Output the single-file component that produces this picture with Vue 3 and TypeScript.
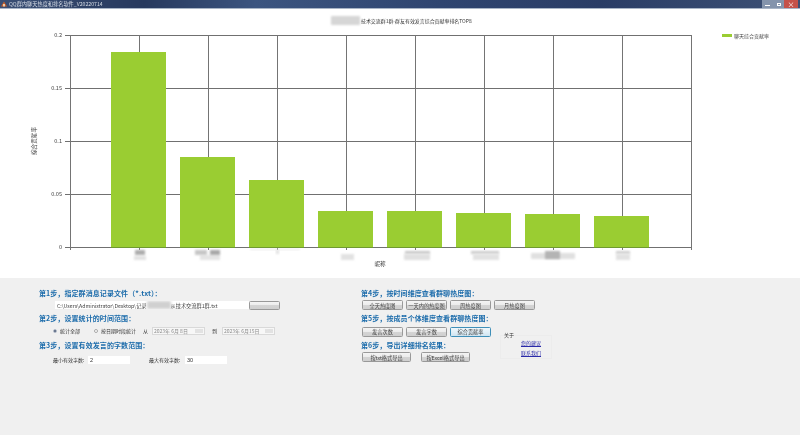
<script setup lang="ts">
const plotLeft = 70
const plotTop = 35
const plotBottom = 247
const plotRight = 691
const verticals = Array.from({ length: 10 }, (_, i) => plotLeft + i * 69)
const yTicks = [
  { label: '0.2', y: 35 },
  { label: '0.15', y: 88 },
  { label: '0.1', y: 141 },
  { label: '0.05', y: 194 },
  { label: '0', y: 247 },
]
const barTops = [52, 157, 180, 211, 211, 213, 214, 216]
const bars = barTops.map((top, i) => ({ x: 111 + i * 69, y: top, h: plotBottom - top }))
const smudges = [
  { x: 134, y: 256, w: 12, h: 4, c: '#e2e2e2' },
  { x: 135, y: 250, w: 10, h: 5, c: '#adadad' },
  { x: 200, y: 255, w: 20, h: 5, c: '#e4e4e4' },
  { x: 195, y: 250, w: 12, h: 5, c: '#c6c6c6' },
  { x: 210, y: 250, w: 10, h: 5, c: '#a8a8a8' },
  { x: 250, y: 249, w: 50, h: 1, c: '#e6e6e6' },
  { x: 276, y: 250, w: 3, h: 4, c: '#e2e2e2' },
  { x: 341, y: 254, w: 13, h: 6, c: '#e2e2e2' },
  { x: 405, y: 251, w: 25, h: 3, c: '#c8c8c8' },
  { x: 404, y: 254, w: 26, h: 6, c: '#e0e0e0' },
  { x: 471, y: 251, w: 28, h: 3, c: '#cccccc' },
  { x: 473, y: 254, w: 26, h: 6, c: '#e2e2e2' },
  { x: 531, y: 253, w: 44, h: 6, c: '#e0e0e0' },
  { x: 545, y: 251, w: 15, h: 8, c: '#b4b4b4' },
  { x: 616, y: 251, w: 14, h: 3, c: '#cfcfcf' },
  { x: 616, y: 254, w: 14, h: 6, c: '#e2e2e2' },
]
const timeButtons = ['全天热度图', '一天内的热度图', '周热度图', '月热度图']
const memberButtons = ['发言次数', '发言字数', '综合贡献率']
const exportButtons = ['按txt格式导出', '按Excel格式导出']
</script>

<template>
  <div class="window">
    <header class="titlebar">
      <svg class="app-icon" viewBox="0 0 6 6" width="6" height="6">
        <path d="M3 0.5 L6 5.5 L0 5.5 Z" fill="#c8602c" />
        <rect x="2.2" y="3" width="1.6" height="2.5" fill="#f4e4c8" />
      </svg>
      <span class="title-text">QQ群内聊天热度和排名软件_V20220714</span>
      <div class="window-controls">
        <span class="ctl"><i class="min"></i></span>
        <span class="ctl"><i class="max"></i></span>
        <span class="ctl close"><i class="x">×</i></span>
      </div>
    </header>

    <svg class="chart" viewBox="0 0 800 269" width="800" height="269">
      <defs>
        <filter id="smudge" x="-30%" y="-80%" width="160%" height="260%">
          <feGaussianBlur stdDeviation="1" />
        </filter>
      </defs>
      <g transform="translate(0,-9)">
        <rect x="331" y="16" width="29" height="9" fill="#d6d6d6" filter="url(#smudge)" />
        <text x="361" y="23" class="chart-title">技术交流群1群-群友有效发言综合贡献率排名TOP8</text>

        <g v-for="t in yTicks" :key="t.label">
          <line :x1="plotLeft - 5" :x2="plotRight" :y1="t.y + 0.5" :y2="t.y + 0.5" class="grid" />
          <text :x="plotLeft - 8" :y="t.y + 2.3" text-anchor="end" class="tick">{{ t.label }}</text>
        </g>
        <line v-for="x in verticals" :key="x" :x1="x + 0.5" :x2="x + 0.5" :y1="plotTop" :y2="plotBottom + 3" class="vgrid" />

        <rect v-for="b in bars" :key="b.x" :x="b.x" :y="b.y" width="55" :height="b.h" fill="#9acd32" />
        <line v-for="b in bars" :key="'base' + b.x" :x1="b.x" :x2="b.x + 55" :y1="plotBottom + 0.5" :y2="plotBottom + 0.5" stroke="#6f9a30" />

        <rect v-for="s in smudges" :key="s.x + '-' + s.y" :x="s.x" :y="s.y" :width="s.w" :height="s.h" :fill="s.c" filter="url(#smudge)" />

        <text transform="translate(36,141) rotate(-90)" text-anchor="middle" class="tick">综合贡献率</text>
        <text x="380" y="266" text-anchor="middle" class="tick">昵称</text>

        <rect x="722" y="34" width="10" height="3" fill="#9acd32" />
        <text x="734" y="38" class="legend">聊天综合贡献率</text>
      </g>
    </svg>

    <section class="panel">
      <div class="col-left">
        <h3>第1步，指定群消息记录文件（*.txt）：</h3>
        <div class="row file-row">
          <div class="file-input">
            <span>C:\Users\Administrator\Desktop\记录</span><i class="blur-mask"></i><span>从技术交流群1群.txt</span>
          </div>
          <button class="btn browse"></button>
        </div>
        <h3>第2步，设置统计的时间范围：</h3>
        <div class="row range-row">
          <span class="radio on"></span><span class="label w-all">统计全部</span>
          <span class="radio"></span><span class="label w-date">按日期时段统计</span>
          <span class="label from">从</span>
          <span class="date">2023年 6月 8日<i class="drop"></i></span>
          <span class="label to">到</span>
          <span class="date">2023年 6月15日<i class="drop"></i></span>
        </div>
        <h3>第3步，设置有效发言的字数范围：</h3>
        <div class="row limit-row">
          <span class="label limit-label">最小有效字数:</span>
          <input class="num" value="2" />
          <span class="label limit-label second">最大有效字数:</span>
          <input class="num" value="30" />
        </div>
      </div>

      <div class="col-right">
        <h3 class="full">第4步，按时间维度查看群聊热度图：</h3>
        <div class="btn-row full">
          <button v-for="b in timeButtons" :key="b" class="btn action">{{ b }}</button>
        </div>
        <h3 class="full">第5步，按成员个体维度查看群聊热度图：</h3>
        <div class="btn-row">
          <button v-for="(b, i) in memberButtons" :key="b" class="btn action" :class="{ active: i === 2 }">{{ b }}</button>
        </div>
        <fieldset class="about">
          <legend>关于</legend>
          <a>您的建议</a>
          <a>联系我们</a>
        </fieldset>
        <h3>第6步，导出详细排名结果：</h3>
        <div class="btn-row export">
          <button v-for="b in exportButtons" :key="b" class="btn wide">{{ b }}</button>
        </div>
      </div>
    </section>
  </div>
</template>

<style scoped>
.window {
  width: 800px;
  height: 435px;
  display: flex;
  flex-direction: column;
  overflow: hidden;
  background: #fff;
  font-family: "Noto Sans CJK SC", "Liberation Sans", sans-serif;
  filter: blur(0.3px);
}
.titlebar {
  height: 9px;
  flex: none;
  display: flex;
  align-items: center;
  gap: 2px;
  padding-left: 1px;
  background: linear-gradient(90deg, #3a4f74 0%, #27395e 18%, #3c5580 32%, #2f4570 55%, #2a3d66 75%, #3d5175 100%);
  border-bottom: 1px solid #a9b5c6;
  box-sizing: border-box;
}
.app-icon { flex: none; }
.title-text {
  font-size: 5.2px;
  line-height: 8px;
  color: #d7dde6;
  white-space: nowrap;
}
.window-controls {
  margin-left: auto;
  margin-right: 2px;
  display: flex;
  height: 8px;
  align-self: flex-start;
}
.ctl {
  width: 11px;
  height: 8px;
  display: flex;
  align-items: center;
  justify-content: center;
  background: #8494ac;
}
.ctl.close { width: 14px; background: #c4524a; }
.min { width: 5px; height: 1px; background: #fff; margin-top: 2px; }
.max { width: 4px; height: 3px; border: 1px solid #fff; box-sizing: border-box; }
.x { color: #fff; font-size: 7px; line-height: 8px; font-style: normal; }

.chart { display: block; flex: none; }
.chart-title { font-size: 4.95px; fill: #333; }
.tick { font-size: 5.6px; fill: #444; }
.legend { font-size: 5px; fill: #444; }
.grid { stroke: #707070; stroke-width: 1; }
.vgrid { stroke: #747474; stroke-width: 1; }

.panel {
  flex: 1;
  display: flex;
  background: #f0f0f0;
  padding-top: 9px;
  padding-left: 39px;
  align-items: flex-start;
}
h3 {
  margin: 0;
  font-size: 7px;
  font-weight: 700;
  letter-spacing: 0.08px;
  color: #1c6cab;
  display: flex;
  align-items: center;
  white-space: nowrap;
}
.col-left {
  width: 322px;
  flex: none;
  display: grid;
  grid-template-rows: 11px 14px 12px 13px 15px 16px;
}
.row { display: flex; align-items: center; }
.label { font-size: 5px; line-height: 6px; color: #333; white-space: nowrap; }

.file-row { padding-left: 16px; }
.file-input {
  width: 194px;
  height: 8px;
  background: #fff;
  display: flex;
  align-items: center;
  font-size: 5.2px;
  color: #444;
  padding-left: 2px;
  box-sizing: border-box;
  white-space: nowrap;
  overflow: hidden;
}
.blur-mask {
  width: 24px;
  height: 8px;
  background: #d0d0d0;
  filter: blur(1.5px);
  flex: none;
}
.browse {
  width: 31px;
  height: 9px;
  margin-left: 3px;
}

.range-row { padding-left: 14px; }
.radio {
  width: 4px;
  height: 4px;
  border-radius: 50%;
  border: 1px solid #a8a8a8;
  background: #fff;
  box-sizing: border-box;
  flex: none;
}
.radio.on { background: #4a5a78; border-color: #b8c0cc; }
.w-all { width: 34px; margin-left: 3px; }
.w-date { width: 42px; margin-left: 3px; }
.from { width: 9px; }
.to { margin: 0 5px 0 7px; }
.date {
  width: 53px;
  height: 8px;
  flex: none;
  background: #f7f7f7;
  border: 1px solid #d9d9d9;
  box-sizing: border-box;
  font-size: 5px;
  line-height: 6px;
  color: #8a8a8a;
  padding-left: 1px;
  display: flex;
  align-items: center;
  white-space: nowrap;
  justify-content: space-between;
}
.drop {
  width: 8px;
  height: 4px;
  background: #e2e2e2;
  margin-right: 1px;
}

.limit-row { padding-left: 14px; }
.limit-label { width: 35px; margin-bottom: 1px; }
.limit-label.second { margin-left: 19px; width: 36px; }
.num {
  width: 42px;
  height: 8px;
  border: 0;
  padding: 0 0 0 2px;
  margin: 0;
  background: #fff;
  font-family: "Liberation Sans", sans-serif;
  font-size: 5.5px;
  color: #333;
  box-sizing: border-box;
  outline: none;
}

.col-right {
  width: 200px;
  display: grid;
  grid-template-columns: 139px 1fr;
  grid-template-rows: 11px 14px 12px 15px 11px 14px;
}
.full { grid-column: 1 / -1; }
.btn-row {
  display: flex;
  align-items: center;
  gap: 3px;
  padding-left: 1px;
}
.btn {
  padding: 0;
  margin: 0;
  border: 1px solid #999;
  border-radius: 1.5px;
  background: linear-gradient(#f4f4f4 0%, #ececec 45%, #d4d4d4 50%, #cfcfcf 100%);
  font-family: inherit;
  font-size: 5.2px;
  line-height: 7px;
  color: #444;
  white-space: nowrap;
  box-sizing: border-box;
}
.action { width: 41px; height: 10px; }
.active {
  border-color: #3f8fb8;
  background: linear-gradient(#eef7fc 0%, #e2f0f8 50%, #cfe4f0 100%);
}
.export { gap: 10px; }
.wide { width: 49px; height: 10px; }

.about {
  grid-column: 2;
  grid-row: 4 / span 3;
  align-self: start;
  width: 52px;
  height: 27px;
  margin: 8px 0 0;
  padding: 1px 0 0 20px;
  border: 1px solid #ececec;
  box-sizing: border-box;
  display: flex;
  flex-direction: column;
  gap: 3px;
  min-width: 0;
}
.about legend {
  font-size: 5px;
  line-height: 6px;
  color: #333;
  padding: 0;
  margin-left: -17px;
}
.about a {
  font-size: 5px;
  line-height: 7px;
  color: #2a2aa8;
  text-decoration: underline;
}
</style>

<style>
html, body { margin: 0; padding: 0; background: #f0f0f0; }
</style>
